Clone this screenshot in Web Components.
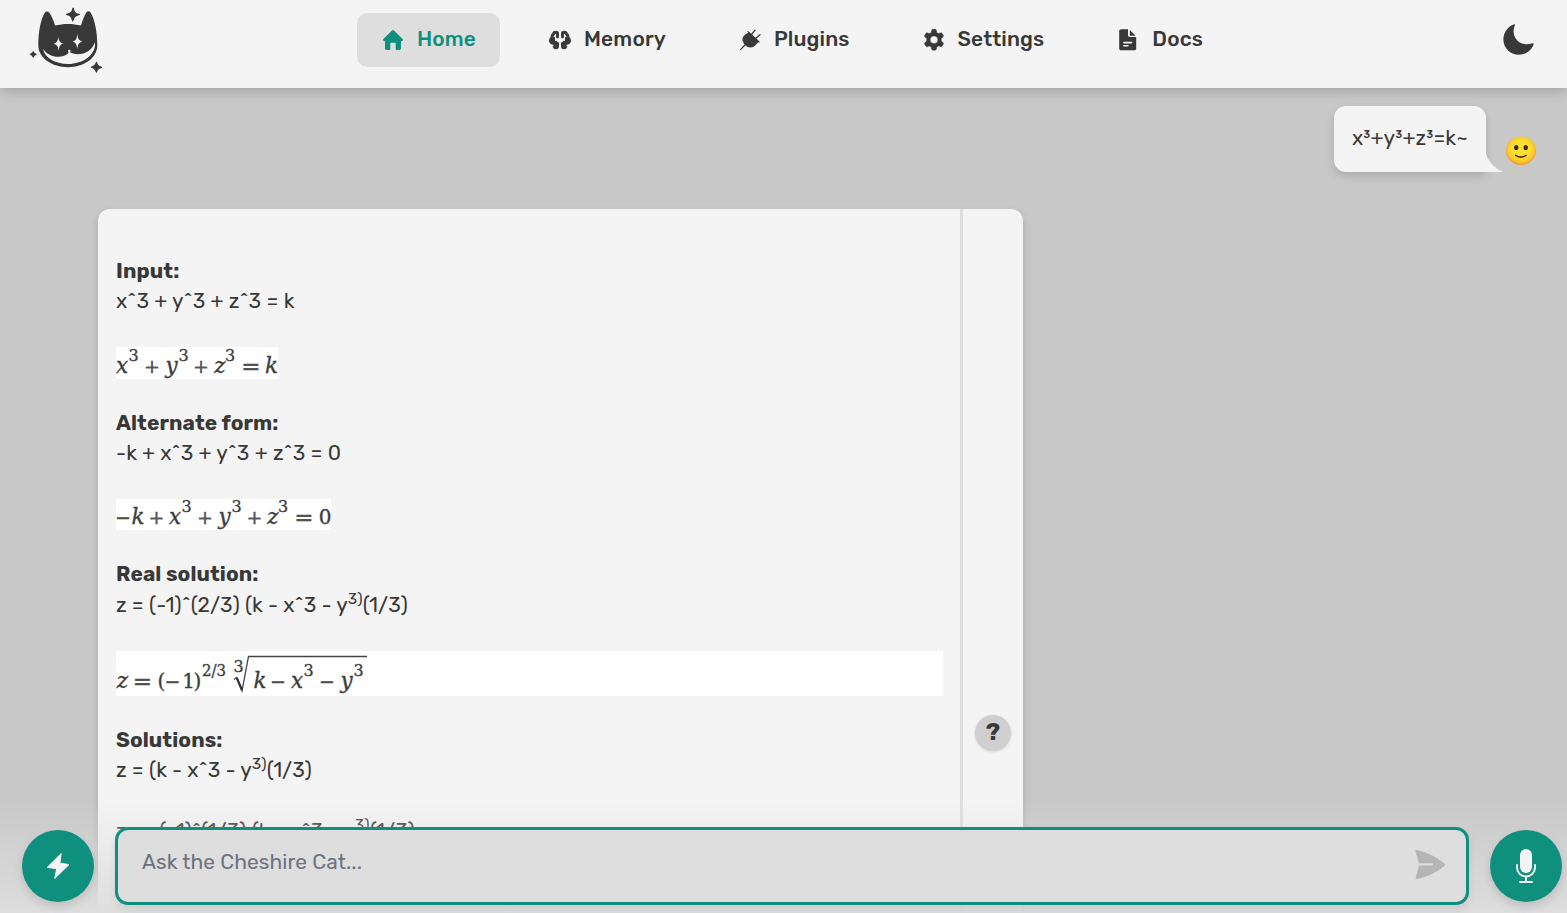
<!DOCTYPE html>
<html lang="en">
<head>
<meta charset="utf-8">
<title>Cheshire Cat</title>
<style>
html,body{margin:0;height:100%;overflow:hidden}
body{font-family:Rubik,Roboto,"Liberation Sans",sans-serif;font-size:20.9px;line-height:30px;color:#383838;background:#c8c8c8}
</style>
</head>
<body>
<cat-app></cat-app>
<script>
const define=(name,html)=>{
  const t=document.createElement('template');t.innerHTML=html;
  customElements.define(name,class extends HTMLElement{
    connectedCallback(){
      if(this.shadowRoot)return;
      this.attachShadow({mode:'open'}).append(t.content.cloneNode(true));
    }
  });
};

/* Text run set to a fixed advance width by tracking. */
customElements.define('fit-text',class extends HTMLElement{
  connectedCallback(){
    if(this.shadowRoot)return;
    const r=this.attachShadow({mode:'open'});
    r.innerHTML='<style>:host{display:inline-block;white-space:pre}span{display:inline-block;white-space:pre}</style><span><slot></slot></span>';
    const w=+this.getAttribute('w'),s=r.querySelector('span');
    this.style.width=w+'px';
    requestAnimationFrame(()=>{
      const n=s.getBoundingClientRect().width;
      s.style.letterSpacing=((w-n)/this.textContent.length)+'px';
    });
  }
});

const icons={
home:'<path d="M11 2.600a1.400 1.400 0 0 1 2 0l8.600 8.400c.8.800.3 2-.8 2H20v7.300c0 1-.7 1.700-1.700 1.700h-2.600c-.6 0-1-.4-1-1v-5.200c0-.6-.4-1-1-1h-3.400c-.6 0-1 .4-1 1V21c0 .6-.4 1-1 1H5.700c-1 0-1.700-.7-1.700-1.700V13h-.8c-1.100 0-1.600-1.200-.8-2Z"/>',
brain:'<g fill="none" stroke="currentColor" stroke-width="2.900" stroke-linecap="round" stroke-linejoin="round"><path d="M9.500 9V5.300C9.500 4.300 8.800 4.200 8 4.200 6.600 4.200 5.700 5 5.500 6.300 4.200 7 3.900 8.200 4.200 9.600 3 10.200 2.500 11.300 2.500 12.500c0 1.500 1 2.600 2.500 2.900 1.500.3 2.500-.3 3-1.200M9.500 15.500V18.500c0 .8-.7 1.200-1.500 1.200-1 0-1.600-.3-1.800-1.100M14.500 9V5.300c0-1 .7-1.100 1.500-1.100 1.400 0 2.300.8 2.500 2.100 1.300.7 1.600 1.900 1.300 3.300 1.200.6 1.700 1.700 1.700 2.900 0 1.500-1 2.600-2.500 2.900-1.500.3-2.500-.3-3-1.200M14.500 15.500V18.500c0 .8.700 1.200 1.500 1.200 1 0 1.600-.3 1.800-1.100"/></g><path d="M3 10.500 7 9v6L4 16ZM21 10.500 17 9v6L20 16ZM6 15h4.900v3H6ZM18 15h-4.900v3H18Z"/>',
plug:'<g stroke="currentColor" stroke-linecap="round"><path stroke-linejoin="round" stroke-width="1.200" d="M10.800 5 19.800 13.500 17.300 16.500C14.800 19 11.500 19.600 8.400 17.400L6.500 15.500C4.200 12.500 5 9.400 7.300 7.300Z"/><path fill="none" stroke-width="1.300" d="M7 17 2.700 21.400M13.500 6.500 17 2.200M17 11 22 6.700M10 3.600 21 14"/></g>',
gear:'<path fill-rule="evenodd" stroke="currentColor" stroke-width=".4" d="M9.300 4.500 9.500 2.700Q9.700 1.300 11 1.300H13Q14.300 1.300 14.500 2.700L14.700 4.500 16.600 5.600 18.200 4.900Q19.600 4.300 20.200 5.400L21.300 7.300Q21.900 8.400 20.800 9.300L19.300 10.500V13L20.800 14.200Q21.900 15.100 21.300 16.200L20.200 18.100Q19.600 19.200 18.200 18.600L16.600 17.900 14.700 19 14.500 20.800Q14.300 22.200 13 22.200H11Q9.700 22.200 9.500 20.800L9.300 19 7.400 17.900 5.800 18.600Q4.400 19.200 3.800 18.100L2.700 16.200Q2.100 15.100 3.200 14.200L4.700 13V10.500L3.200 9.300Q2.100 8.400 2.700 7.300L3.800 5.400Q4.400 4.300 5.800 4.900L7.400 5.600ZM12 7.900a3.850 3.850 0 1 0 0 7.700 3.850 3.850 0 0 0 0-7.700Z"/>',
doc:'<path fill-rule="evenodd" d="M5.200 1.200H12v5.900c0 1.300.700 2 2 2h6.200v11.400c0 1-.7 1.800-1.700 1.800H5c-1 0-1.800-.8-1.800-1.800V3.200c0-1.200.8-2 2-2Zm2.700 12.600a.8.800 0 0 0 0 1.600h7.600a.8.800 0 0 0 0-1.600Zm0 3.200a.8.800 0 0 0 0 1.600h4a.8.800 0 0 0 0-1.600Z"/><path d="M13.800 2 19.500 7.700h-4.900c-.5 0-.8-.3-.8-.8Z"/>'
};

customElements.define('nav-item',class extends HTMLElement{
  connectedCallback(){
    this.attachShadow({mode:'open'}).innerHTML=`<style>
    :host{display:flex;align-items:center;gap:12px;height:54px;padding:0 24px;border-radius:10.500px;font-weight:500;box-sizing:border-box}
    :host([active]){background:#dedede;color:#0f8f7e}
    svg{flex:none;display:block}span{position:relative;top:-1px}
    </style><svg width="24" height="24" viewBox="0 0 24 24" fill="currentColor">${icons[this.getAttribute('icon')]}</svg><span><slot></slot></span>`;
  }
});

define('cat-logo',`<style>:host{display:block;width:76px;height:70px}svg{display:block}</style>
<svg width="76" height="70" viewBox="28 5 76 70" fill="#383838">
<path d="M38.300 45C38.300 33 40.500 19.500 44.800 12.800 46 11 48 11 49.200 12.800 52 16.500 53.600 20.500 55 25.600 63 23.300 73 23.300 81 25.600 82.400 20.500 84 16.500 86.300 12.500 87.400 10.700 89.400 10.700 90.600 12.500 95 19.500 97.300 33 97.300 45 97.300 58 84 67.200 68 67.200S38.300 58 38.300 45Z"/>
<path fill="#f4f4f4" d="M43 49C47 54.500 53 57.200 59.500 56.800 64 56.500 67.500 54.800 69.200 51.800 72 54 77 54.600 82 53.800 88 52.500 93 48 95 42.200 96.500 54.500 83 64 68 64 55 64 44.500 57.500 43 49Z"/>
<g fill="#f4f4f4"><path d="M58.300 36c.5 5 1.300 6.600 5 7.500-3.500 1-4.200 3-4.600 7.500-.6-4.600-1.500-6.300-5-7.300 3.500-1 4.300-2.800 4.600-7.700ZM77.300 33.500c.5 5.200 1.400 7 5 8-3.600 1-4.500 3-5 7.800-.5-4.800-1.400-6.700-4.800-7.500 3.500-1.200 4.400-3 4.800-8.300Z"/><circle cx="69.300" cy="51" r="1.300"/></g>
<path d="M73 8c1.300 4.700 2 5.500 6.500 6.500-4.700 1.200-5.700 2.500-6.800 6.500-1.200-4.500-2-5.600-6.200-6.600 4.500-1 5.500-2.100 6.500-6.400ZM96.400 62.300c1.100 3 1.800 4 5.200 4.900-3.400 1-4.300 1.800-5.200 4.900-1-3.100-1.800-4.100-5.100-4.900 3.300-1 4.200-1.800 5.100-4.900ZM33.200 51.700c.6 1.600 1.200 2.200 2.900 2.600-1.700.6-2.300 1.200-2.800 2.800-.7-1.700-1.200-2.300-2.900-2.800 1.700-.6 2.300-1.200 2.800-2.600Z" stroke="#383838" stroke-width="1.100" stroke-linejoin="round"/>
</svg>`);

define('top-bar',`<style>
:host{display:grid;grid-template-columns:357px 1fr 68px;height:88px;background:#f4f4f4;box-shadow:0 3px 12px rgba(0,0,0,.19);position:relative;z-index:2}
cat-logo{margin:4.500px 0 0 28px}nav{display:flex;gap:24px;padding-top:13px}.moon{margin-top:22px;display:block}
</style>
<cat-logo></cat-logo>
<nav>
<nav-item icon="home" active><fit-text w="59">Home</fit-text></nav-item>
<nav-item icon="brain"><fit-text w="82">Memory</fit-text></nav-item>
<nav-item icon="plug"><fit-text w="75.5">Plugins</fit-text></nav-item>
<nav-item icon="gear"><fit-text w="86.8">Settings</fit-text></nav-item>
<nav-item icon="doc"><fit-text w="50.800">Docs</fit-text></nav-item>
</nav>
<svg class="moon" width="36" height="36" viewBox="1499 22 36 36"><path fill="#383838" d="M1514.200 24.300c.6-.2 1 .200.8.700-1.600 3.500-2 8.300 0 12.300 3 6 9.200 8.200 17.800 6 .6-.2 1.100.2.900.8-1.800 6-7.600 10.700-14.900 10.700-8.600 0-15.400-6.700-15.400-15.200 0-6.900 4.300-13.100 10.800-15.300Z"/></svg>`);

define('user-message',`<style>
:host{display:flex;align-self:flex-end;margin:18px 30px 0 0;height:66px}
.b{width:152px;height:66px;box-sizing:border-box;padding:17px 18px;border-radius:12px 12px 0 12px;background:#f4f4f4;box-shadow:0 4px 9px rgba(0,0,0,.14)}
.tail{width:18px;height:18px;align-self:flex-end;display:block}.face{margin:29px 0 0 1px;display:block}
</style><div class="b"><fit-text w="116">x³+y³+z³=k~</fit-text></div>
<svg class="tail" viewBox="0 0 18 18"><path fill="#f4f4f4" d="M0 0c2 6 8 15 17 17.500L16 18H0Z"/></svg>
<svg class="face" width="32" height="32" viewBox="0 0 32 32"><defs><radialGradient id="g" cx=".5" cy=".45" r=".53"><stop offset=".55" stop-color="#fde02f"/><stop offset=".85" stop-color="#fbc52d"/><stop offset="1" stop-color="#f29a27"/></radialGradient></defs><ellipse cx="16" cy="15.700" rx="14.900" ry="14.300" fill="url(#g)"/><ellipse cx="11.200" cy="12.600" rx="2.200" ry="2.700" fill="#422b0d"/><ellipse cx="20.700" cy="12.600" rx="2.200" ry="2.700" fill="#422b0d"/><path d="M10.700 20.300q5.200 3.600 10.400 0" fill="none" stroke="#513012" stroke-width="1.600" stroke-linecap="round"/></svg>`);

/* Typeset equation. Each term is glyph, left, baseline, width, kind; glyphs are centred in their width. */
customElements.define('math-image',class extends HTMLElement{
  connectedCallback(){
    const w=+this.getAttribute('w'),h=+this.getAttribute('h');
    const out=this.getAttribute('terms').split(';').map(s=>{
      const [c,x,y,width,kind]=s.split(',');
      return `<text class="${kind||''}" x="${+x+width/2}" y="${y}"${c.length>1?` textLength="${width}" lengthAdjust="spacingAndGlyphs"`:''}>${c}</text>`;
    }).join('');
    const root=this.hasAttribute('root')?'<path d="M118 28.500l2.800-2L126 40l6.500-34.500H251" fill="none" stroke="#444" stroke-width="1.300"/><path d="M120.800 27 126 39" stroke="#333" stroke-width="2.200"/>':'';
    this.attachShadow({mode:'open'}).innerHTML=`<style>:host{display:block;background:#fff;width:${w}px;height:${h}px}svg{display:block}
    text{font:20px "DejaVu Serif","Liberation Serif",serif;fill:#3d3d3d;stroke:#3d3d3d;stroke-width:.35px;text-anchor:middle}.i{font-style:italic;font-size:21.500px}.s{font-size:16px}.o{fill:#555;font-size:19px}.e{fill:#555;font-size:23px}</style><svg width="${w}" height="${h}">${root}${out}</svg>`;
  }
});

define('answer-card',`<style>
:host{display:grid;grid-template-columns:862px 63px;margin:37px 0 0 98px;width:925px;height:760px;background:#f4f4f4;border-radius:12px;box-shadow:0 4px 9px rgba(0,0,0,.14)}
.body{padding:47px 0 0 18px;display:flex;flex-direction:column}
.p{height:91px}.p>div{height:30px;display:flex;align-items:baseline}.p b{font-weight:700;display:block}
.m{height:61px}sup{position:relative;top:-.5em;font-size:75%;line-height:0;vertical-align:baseline}
.side{border-left:3px solid #dedede;box-sizing:border-box}
.q{width:36px;height:36px;border-radius:50%;background:#cfcfcf;box-shadow:0 1px 3px rgba(0,0,0,.12);margin:506px 0 0 12px;text-align:center;font-weight:700;font-size:24px;line-height:35px}
</style>
<div class="body">
<div class="p"><div><b><fit-text w="63.5">Input:</fit-text></b></div><div><fit-text w="178.5">x^3 + y^3 + z^3 = k</fit-text></div></div>
<div class="m"><math-image w="162" h="32" terms="x,0,26,12,i;3,13,14,9,s;+,29,26,14,o;y,49,26,13,i;3,63,14,9,s;+,78,26,14,o;z,98,26,12,i;3,109,14,10,s;=,126,27,18,e;k,149,26,13,i"></math-image></div>
<div class="p"><div><b><fit-text w="162.500">Alternate form:</fit-text></b></div><div><fit-text w="225">-k + x^3 + y^3 + z^3 = 0</fit-text></div></div>
<div class="m" style="height:60px"><math-image w="215" h="31" terms="−,1,25,12,o;k,15,25,14,i;+,34,25,13,o;x,53,25,12,i;3,66,13,9,s;+,82,25,14,o;y,102,25,13,i;3,116,13,9,s;+,132,25,13,o;z,151,25,12,i;3,162,13,10,s;=,179,26,18,e;0,203,25,12"></math-image></div>
<div class="p" style="height:92px"><div><b><fit-text w="142.500">Real solution:</fit-text></b></div><div style="height:31px;padding-top:1px;box-sizing:border-box"><fit-text w="292">z = (-1)^(2/3) (k - x^3 - y<sup>3)</sup>(1/3)</fit-text></div></div>
<div class="m" style="height:74px"><math-image root w="827" h="45" terms="z,1,37,11,i;=,18,38,17,e;(,42,37,7;−,50,37,13,o;1,67,37,11;),78,37,7;2/3,86,25,24,s;3,118,21,9,s;k,138,37,12,i;−,155,37,14,o;x,175,37,12,i;3,188,25,9,s;−,204,37,14,o;y,224,37,13,i;3,238,25,9,s"></math-image></div>
<div class="p"><div><b><fit-text w="106.500">Solutions:</fit-text></b></div><div><fit-text w="196">z = (k - x^3 - y<sup>3)</sup>(1/3)</fit-text></div></div>
<div class="p"><div><fit-text w="299">z = -(-1)^(1/3) (k - x^3 - y<sup>3)</sup>(1/3)</fit-text></div></div>
</div>
<div class="side"><div class="q">?</div></div>`);

define('round-button',`<style>:host{display:flex;width:72px;height:72px;border-radius:50%;background:#0f8f7e;color:#f4f4f4;align-items:center;justify-content:center;flex:none;box-shadow:0 5px 10px rgba(0,0,0,.13)}</style><slot></slot>`);

define('ask-bar',`<style>
:host{display:flex;position:absolute;left:0;right:0;bottom:0;height:113px;box-sizing:border-box;padding:27px 5px 8px 22px;gap:21px;align-items:center;z-index:1;background:linear-gradient(to bottom,rgba(222,222,222,0),#dedede)}
.in{flex:1;height:78px;box-sizing:border-box;border:3px solid #0f8f7e;border-radius:13px;background:#dedede;display:flex;justify-content:space-between;padding:17px 20px 0 24px;color:#6b7280;box-shadow:0 5px 10px rgba(0,0,0,.08)}
svg{display:block}
</style>
<round-button><svg width="36" height="36" viewBox="40 848 36 36"><path fill="currentColor" stroke="currentColor" stroke-width="1" stroke-linejoin="round" d="M61.200 853.500 47.300 867.300 56.700 868.800 54.700 878.500 69 864.600 59.900 863.200Z"/></svg></round-button>
<div class="in"><fit-text w="220">Ask the Cheshire Cat...</fit-text>
<svg width="32" height="32" viewBox="0 0 32 32" style="margin-top:2px"><path fill="#b5b5b5" d="M2.300.9C13 3 23 8 30.800 15c.6.6.6 1 0 1.500C23 23.500 13 28 2.600 30c-.8.100-1.100-.3-.9-1L5 16.500h13.300c1.300 0 1.300-2.200 0-2.200H5L1.400 2C1.200 1.200 1.600.8 2.300.9Z"/></svg></div>
<round-button><svg width="36" height="40" viewBox="1508 846 36 40"><rect x="1520" y="849" width="12" height="24" rx="6" fill="currentColor"/><path d="M1517 865v2.500a9 9 0 0 0 18 0V865M1526 877v5M1520 882h12" fill="none" stroke="currentColor" stroke-width="2" stroke-linecap="round"/></svg></round-button>`);

define('cat-app',`<style>:host{display:flex;flex-direction:column;position:relative;height:100vh;overflow:hidden;background:#c8c8c8}
top-bar,user-message,answer-card{flex-shrink:0}</style>
<top-bar></top-bar><user-message></user-message><answer-card></answer-card><ask-bar></ask-bar>`);
</script>
</body>
</html>
